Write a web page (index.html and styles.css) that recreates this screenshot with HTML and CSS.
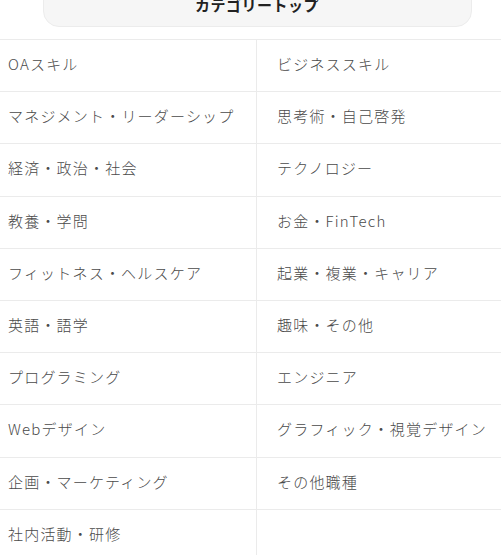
FILE: index.html
```html
<!DOCTYPE html>
<html lang="ja">
<head>
<meta charset="utf-8">
<link rel="stylesheet" href="styles.css">
</head>
<body>
<div class="page">
  <a class="top-btn" href="#">カテゴリートップ</a>
  <ul class="cats">
    <li class="cat">OAスキル</li>
    <li class="cat">ビジネススキル</li>
    <li class="cat">マネジメント・リーダーシップ</li>
    <li class="cat">思考術・自己啓発</li>
    <li class="cat">経済・政治・社会</li>
    <li class="cat">テクノロジー</li>
    <li class="cat">教養・学問</li>
    <li class="cat">お金・FinTech</li>
    <li class="cat">フィットネス・ヘルスケア</li>
    <li class="cat">起業・複業・キャリア</li>
    <li class="cat">英語・語学</li>
    <li class="cat">趣味・その他</li>
    <li class="cat">プログラミング</li>
    <li class="cat">エンジニア</li>
    <li class="cat">Webデザイン</li>
    <li class="cat">グラフィック・視覚デザイン</li>
    <li class="cat">企画・マーケティング</li>
    <li class="cat">その他職種</li>
    <li class="cat">社内活動・研修</li>
    <li class="cat"></li>
  </ul>
</div>
</body>
</html>
```
FILE: styles.css
```css
html, body {
  margin: 0;
  padding: 0;
  background: #fff;
  overflow: hidden;
}
body {
  font-family: "Noto Sans CJK JP", "Noto Sans", sans-serif;
}
.page {
  width: 538px;
  margin-left: -12px;
}
.top-btn {
  display: flex;
  align-items: center;
  justify-content: center;
  box-sizing: border-box;
  width: 429px;
  height: 46px;
  margin: -19px auto 0;
  background: #f6f6f6;
  border: 1px solid #ececec;
  border-radius: 16px;
  color: #222;
  font-weight: 700;
  font-size: 15px;
  letter-spacing: 0.5px;
  text-decoration: none;
}
.cats {
  list-style: none;
  margin: 12px 0 0;
  padding: 0;
  display: grid;
  grid-template-columns: 269px 269px;
  border-top: 1px solid #ebebeb;
}
.cat {
  box-sizing: border-box;
  height: 52.2px;
  padding: 0 20px 4px;
  display: flex;
  align-items: center;
  border-bottom: 1px solid #ebebeb;
  color: #4a4a4a;
  font-size: 15px;
  font-weight: 300;
  letter-spacing: 1.2px;
  white-space: nowrap;
}
.cat:nth-child(odd) {
  border-right: 1px solid #ebebeb;
}
```
